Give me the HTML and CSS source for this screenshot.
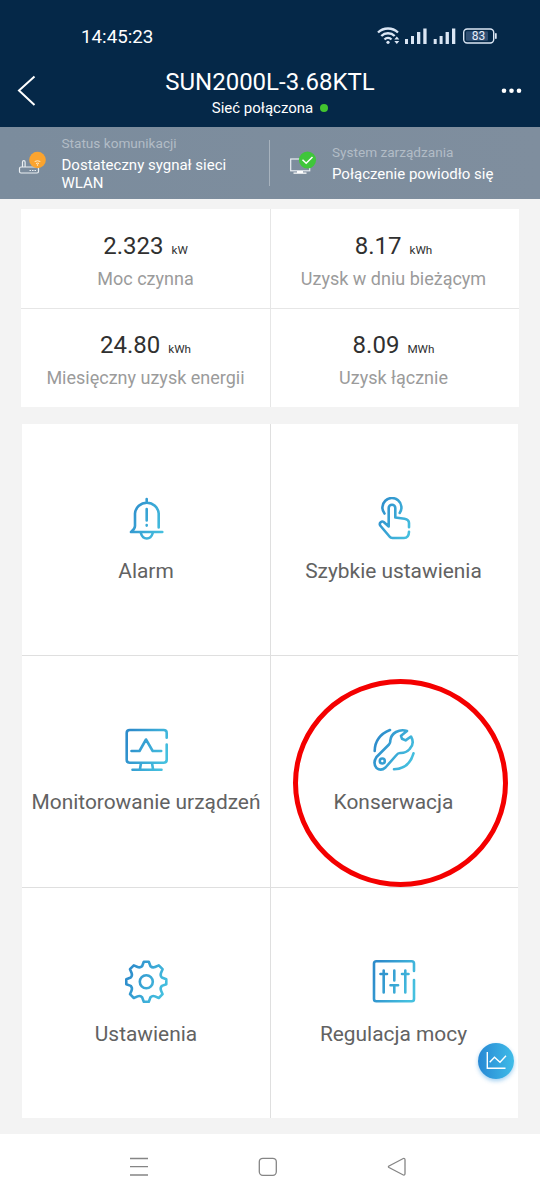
FILE: index.html
```html
<!DOCTYPE html>
<html lang="pl">
<head>
<meta charset="utf-8">
<title>SUN2000L-3.68KTL</title>
<link rel="stylesheet" href="styles.css">
</head>
<body>
<svg class="defs" width="0" height="0" aria-hidden="true">
  <defs>
    <linearGradient id="blue" gradientUnits="userSpaceOnUse" x1="4" y1="12" x2="42" y2="28">
      <stop offset="0" stop-color="#2d8ccb"/><stop offset="1" stop-color="#45c0df"/>
    </linearGradient>
  </defs>
</svg>
<div class="screen">
  <header class="header">
    <div class="statusbar">
      <span class="clock">14:45:23</span>
      <svg class="indicators" width="122" height="20" viewBox="376 26 122 20">
        <g fill="none" stroke="#dbe6f4" stroke-width="2.4">
          <path d="M378 32.5a14.5 14.5 0 0 1 20 0"/>
          <path d="M381.3 36a9.6 9.6 0 0 1 13.4 0"/>
          <path d="M384.5 39.5a5 5 0 0 1 7 0"/>
        </g>
        <g fill="#dbe6f4">
          <circle cx="388" cy="42.3" r="1.6"/>
          <path d="M394.3 39.6l2.5-3 2.5 3zM394.3 41l2.5 3 2.5-3z"/>
          <path d="M405 39h3v5h-3zM411 36h3v8h-3zM417 32h3.3v12H417zM423.3 28.500h3.300V44h-3.300zM433.700 39h3v5h-3zM439.600 36h3v8h-3zM445.600 32h3.300v12h-3.300zM452 28.500h3.300V44H452z"/>
          <rect x="495" y="33" width="1.700" height="6" rx=".8"/>
        </g>
        <rect x="463.700" y="29" width="30" height="14" rx="3.500" fill="none" stroke="#dbe6f4" stroke-width="1.400"/>
        <rect x="466" y="31.200" width="22" height="9.600" rx="1" fill="#304f73"/>
        <text class="battery" x="478.500" y="40.400" text-anchor="middle">83</text>
      </svg>
    </div>
    <div class="titlebar">
      <svg width="50" height="44" viewBox="0 0 50 44"><path d="M34.500 8.500L19 22.500l15.500 14.500" fill="none" stroke="#fff" stroke-width="2"/></svg>
      <div class="heading">
        <h1 class="title">SUN2000L-3.68KTL</h1>
        <p class="subtitle">Sieć połączona<span class="dot"></span></p>
      </div>
      <svg width="50" height="44" viewBox="0 0 50 44" fill="#fff"><circle cx="14" cy="22.800" r="2.300"/><circle cx="21.500" cy="22.800" r="2.300"/><circle cx="29" cy="22.800" r="2.300"/></svg>
    </div>
  </header>

  <section class="links">
    <div class="link">
      <svg width="30" height="28" viewBox="18 149 30 28">
        <g fill="none" stroke="#e9eef2" stroke-width="1.200">
          <rect x="19.500" y="167" width="19" height="6" rx="1.500"/>
          <path d="M22.500 167v-5a1.300 1.300 0 0 1 2.600 0v5"/>
          <path d="M29.500 170.500h1.500m1 0h1.500m1 0h1.500"/>
        </g>
        <circle cx="37.500" cy="160" r="8.300" fill="#fba42f"/>
        <g fill="none" stroke="#fff1d8" stroke-width=".9"><path d="M34.700 161.500q2.800-1.500 5.600 0"/><path d="M36 163.500q1.500-.8 3 0"/></g>
        <circle cx="37.500" cy="165" r=".7" fill="#fff1d8"/>
      </svg>
      <div class="link-text">
        <p class="link-label">Status komunikacji</p>
        <p class="link-value">Dostateczny sygnał sieci WLAN</p>
      </div>
    </div>
    <div class="link link-second">
      <svg width="30" height="28" viewBox="288 149 30 28">
        <rect x="290.700" y="159" width="19" height="11.800" fill="none" stroke="#e9eef2" stroke-width="1.200"/>
        <path d="M297 171h6v1.500h3.500v1.300h-13v-1.300h3.500z" fill="#fff"/>
        <circle cx="307.500" cy="160" r="8.600" fill="#3fc63b"/>
        <path d="M302.500 159.800l3.700 3.500 6.300-6.300" fill="none" stroke="#fff" stroke-width="1.500"/>
      </svg>
      <div class="link-text">
        <p class="link-label">System zarządzania</p>
        <p class="link-value">Połączenie powiodło się</p>
      </div>
    </div>
  </section>

  <main class="content">
    <section class="stats">
      <div class="stat"><p class="value">2.323<span class="unit">kW</span></p><p class="caption">Moc czynna</p></div>
      <div class="stat"><p class="value">8.17<span class="unit">kWh</span></p><p class="caption">Uzysk w dniu bieżącym</p></div>
      <div class="stat"><p class="value">24.80<span class="unit">kWh</span></p><p class="caption">Miesięczny uzysk energii</p></div>
      <div class="stat"><p class="value">8.09<span class="unit">MWh</span></p><p class="caption">Uzysk łącznie</p></div>
    </section>

    <nav class="menu">
      <a class="tile">
        <svg class="icon" viewBox="0 0 44 44">
          <path d="M22.700 2v2.500M34.700 30.500V16.500a11.900 11.900 0 0 0-23.700 0V29q0 3-4 6h31.300M17 36.500q1.500 5 5.800 5t5.800-5M22.700 12v11.500M22.700 28v.6"/>
        </svg><span>Alarm</span>
      </a>
      <a class="tile">
        <svg class="icon" viewBox="0 0 44 44">
          <path d="M12.500 16.500a9.500 9.500 0 1 1 15.200-.5M37 30.300V26q0-3.500-4.500-4.300l-9.200-1.200V11a3.300 3.300 0 0 0-6.600 0v18.500l-5-4.500q-1.500-1-3 .2t-.5 3.300L17.500 39.500q1 1.500 3 1.500H32q4.800 0 5-6.300"/>
        </svg><span>Szybkie ustawienia</span>
      </a>
      <a class="tile">
        <svg class="icon" viewBox="0 0 44 44">
          <path d="M42.700 9.700V5q0-3-3-3h-34q-3 0-3 3v26.700q0 3 3 3h34q3 0 3-3V16.500M7.500 23h8L22 11.500 28.700 23h8.500M17 35l-1 6M28 35l1 6M8.500 41.700h29"/>
        </svg><span>Monitorowanie urządzeń</span>
      </a>
      <a class="tile marked">
        <svg class="icon" viewBox="0 0 44 44">
          <path d="M2.700 23Q3 8 18 2M41.500 25.300Q37 41 22 41.200M4.500 29L17 16.500Q18.500 15 18.300 12.500 18.800 7 24 4q5.500-3 11-1L29 7.800l1 3 3.600 1.600L39 8.500q4 7-1.300 12.500-3.700 4.300-9.700 4-2 0-3.500 2L13.500 39.500q-4.500 4-9 .5-4-5 0-11z"/>
          <circle cx="10.300" cy="33" r="2.500"/>
        </svg><span>Konserwacja</span>
      </a>
      <a class="tile">
        <svg class="icon" viewBox="0 0 44 44">
          <path d="M24.800 1.700L26.500 6.200Q28.500 8 31 7L34.800 5.400 38.600 9.200 37 13Q36 15.500 37.800 17.500L42.300 19.200V24.200L37.800 25.900Q36 28 37 30.400L38.600 34.200 34.800 38 31 36.400Q28.500 35.400 26.500 37.200L24.800 41.700H19.800L18.100 37.200Q16 35.400 13.600 36.400L9.800 38 6 34.200 7.600 30.400Q8.600 28 6.800 25.900L2.300 24.200V19.200L6.800 17.500Q8.600 15.500 7.600 13L6 9.200 9.800 5.400 13.600 7Q16 8 18.100 6.200L19.800 1.700z"/>
          <circle cx="22.300" cy="21.700" r="6.500"/>
        </svg><span>Ustawienia</span>
      </a>
      <a class="tile">
        <svg class="icon" viewBox="0 0 44 44">
          <path d="M42 11V3.500Q42 1.300 39.700 1.300H4.300Q2 1.300 2 3.500V39q0 2.300 2.300 2.300h35.400Q42 41.300 42 39V20M11.700 10.500v22M8.500 14h6.500M22.300 10.500v10M18.500 25.300h7.600M22.300 25.300v7.200M33.300 10.500v22M30 14h6.500"/>
        </svg><span>Regulacja mocy</span>
      </a>
    </nav>
  </main>

  <footer class="navbar">
    <svg width="20" height="20" viewBox="0 0 20 20"><path d="M1 1.500h18M1 9.700h18M1 18h18"/></svg>
    <svg width="20" height="20" viewBox="0 0 20 20"><rect x="1.300" y="1.300" width="17" height="17" rx="3.500"/></svg>
    <svg width="20" height="20" viewBox="0 0 20 20"><path d="M16.300 1.500L2 9q-1.200.7 0 1.500l14.300 7.500q1.700.5 1.700-1.500V3q0-2-1.700-1.500z"/></svg>
  </footer>

  <div class="fab">
    <svg width="36" height="36" viewBox="478 1043 36 36"><path d="M487.300 1052v16.300H505.500M489.700 1062.300l4.800-5 5.500 5 6-6.500" fill="none" stroke="#fff" stroke-width="1.400"/></svg>
  </div>
</div>
</body>
</html>
```
FILE: styles.css
```css
*, *::before, *::after { box-sizing: border-box; }
body { margin: 0; font-family: Roboto, "Noto Sans", sans-serif; }
h1, p { margin: 0; font-weight: 400; }
svg { display: block; flex: none; }
.defs { position: absolute; }

.screen {
  position: relative;
  display: flex;
  flex-direction: column;
  width: 540px;
  height: 1200px;
  overflow: hidden;
  background: #f3f3f3;
}

/* Header */
.header { height: 127px; background: #052848; color: #fff; }
.statusbar {
  display: flex;
  justify-content: space-between;
  height: 68px;
  padding: 26px 42px 0 81px;
}
.clock { font-size: 18.800px; line-height: 22px; }
.battery { font-size: 12px; fill: #e6eefa; }
.titlebar { display: flex; justify-content: space-between; }
.heading { text-align: center; }
.title { font-size: 24px; line-height: 28px; white-space: nowrap; }
.subtitle {
  display: flex;
  align-items: center;
  justify-content: center;
  margin-top: 1px;
  font-size: 15px;
  line-height: 22px;
}
.dot { width: 8px; height: 8px; margin-left: 7px; border-radius: 50%; background: #43c52f; }

/* Connection state */
.links {
  display: flex;
  height: 72px;
  background: linear-gradient(90deg, #7b8c9d, #7f8e9e);
}
.link {
  display: flex;
  align-items: center;
  width: 270px;
  padding-left: 18px;
}
.link-second { position: relative; }
.link-second::before {
  content: "";
  position: absolute;
  left: -1px;
  top: 13px;
  width: 1px;
  height: 46px;
  background: #a7b2bd;
}
.link-text { width: 190px; margin-left: 13.500px; }
.link-second .link-text { margin-left: 14px; }
.link-label { font-size: 13.600px; line-height: 19px; color: #b2bcc6; }
.link-value { margin-top: 4px; font-size: 15px; line-height: 17.500px; color: #fff; }

.content { flex: 1; padding: 10px 21px 0; }

/* Production figures */
.stats {
  display: grid;
  grid-template-columns: 249px 248px;
  grid-template-rows: 99px 98px;
  gap: 1px;
  width: 498px;
  background: #e6e6e6;
}
.stat { padding-top: 22px; background: #fff; text-align: center; white-space: nowrap; }
.stat:nth-child(n+3) { padding-top: 21px; }
.stat:nth-child(even) { padding-right: 3px; }
.value { font-size: 24px; line-height: 30px; color: #303030; }
.unit { margin-left: 8px; font-size: 11.700px; }
.caption { margin-top: 1px; font-size: 18px; line-height: 26px; color: #9b9b9b; }

/* Menu */
.menu {
  display: grid;
  grid-template-columns: 248px 247px;
  grid-template-rows: 231px 231px 230px;
  gap: 1px;
  width: 496px;
  margin: 17px 0 0 1px;
  background: #dfdfdf;
}
.tile {
  display: flex;
  flex-direction: column;
  align-items: center;
  padding-top: 72px;
  background: #fff;
  color: #626262;
  font-size: 20.900px;
  line-height: 28px;
  white-space: nowrap;
}
.tile:nth-child(-n+2) { padding-top: 73px; }
.tile:nth-child(even) { padding-right: 2px; }
.icon {
  width: 44px;
  height: 44px;
  margin-bottom: 16px;
  fill: none;
  stroke: url(#blue);
  stroke-width: 2.600;
  stroke-linecap: round;
  stroke-linejoin: round;
}
.marked { position: relative; }
.marked::after {
  content: "";
  position: absolute;
  left: 22px;
  top: 23px;
  width: 215px;
  height: 208px;
  border: 5.500px solid #f40000;
  border-radius: 50%;
}

/* System navigation */
.navbar {
  display: flex;
  justify-content: space-between;
  height: 66px;
  padding: 23px 133px 0 129px;
  background: #fff;
}
.navbar svg { fill: none; stroke: #858585; stroke-width: 1.300; }

.fab {
  position: absolute;
  left: 478px;
  top: 1043px;
  width: 36px;
  height: 36px;
  border-radius: 50%;
  background: linear-gradient(90deg, #2788d4, #3fbce8);
  box-shadow: 0 2px 4px rgba(50, 150, 225, .45);
}
```
